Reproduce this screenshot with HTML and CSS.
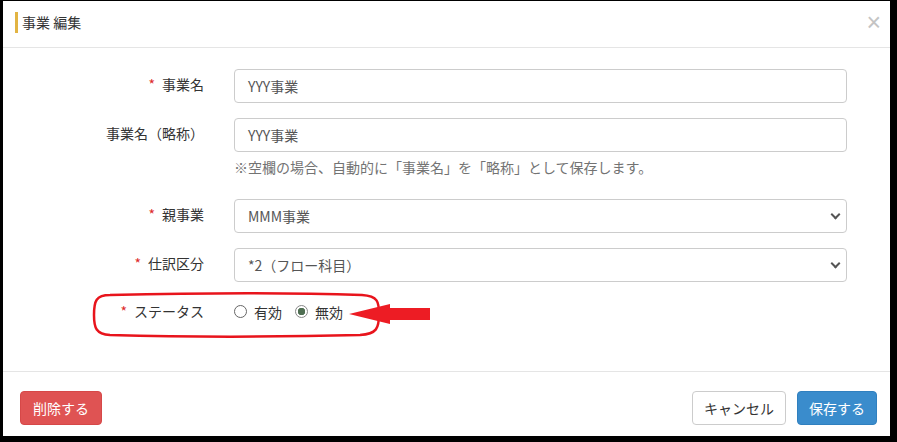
FILE: index.html
```html
<!DOCTYPE html>
<html lang="ja">
<head>
    <meta charset="UTF-8">
    <title>事業 編集</title>
    <link rel="stylesheet" href="styles.css">
</head>
<body>
    <div class="modal">
        <div class="modal-header">
            <div class="modal-title">事業 編集</div>
            <span class="close">&times;</span>
        </div>

        <div class="modal-body">
            <div class="form-row">
                <label class="form-label"><span class="req">*</span>事業名</label>
                <div><div class="input">YYY事業</div></div>
            </div>
            <div class="form-row">
                <label class="form-label">事業名（略称）</label>
                <div>
                    <div class="input">YYY事業</div>
                    <div class="help">※空欄の場合、自動的に「事業名」を「略称」として保存します。</div>
                </div>
            </div>
            <div class="form-row">
                <label class="form-label"><span class="req">*</span>親事業</label>
                <div><div class="input select">MMM事業</div></div>
            </div>
            <div class="form-row">
                <label class="form-label"><span class="req">*</span>仕訳区分</label>
                <div><div class="input select">*2（フロー科目）</div></div>
            </div>
            <div class="form-row radio-row">
                <label class="form-label"><span class="req">*</span>ステータス</label>
                <div class="radios">
                    <span class="radio"><span class="dot"></span>有効</span>
                    <span class="radio checked"><span class="dot"></span>無効</span>
                </div>
            </div>
        </div>

        <div class="modal-footer">
            <button class="btn btn-danger">削除する</button>
            <div class="right">
                <button class="btn btn-default">キャンセル</button>
                <button class="btn btn-primary">保存する</button>
            </div>
        </div>
    </div>

    <!-- red annotation drawn over the screenshot -->
    <svg class="mark" width="897" height="442" viewBox="0 0 897 442">
        <path d="M110 295 C 200 293, 300 293, 362 295 C 378 296, 379 302, 379 314 C 379 328, 377 334, 360 335 C 280 337, 180 337, 110 335 C 96 334, 94 328, 94 315 C 94 301, 96 295, 110 295 Z"
              fill="none" stroke="#e8141c" stroke-width="2.5"/>
        <polygon points="349,314 390,304 390,308 430,308 430,320 390,320 390,324" fill="#ed1c24"/>
    </svg>
</body>
</html>
```

FILE: styles.css
```css
*{
    box-sizing: border-box;
}
body{
    margin: 0;
    background: #000;
    font-family: "Noto Sans CJK JP", "Liberation Sans", sans-serif;
    font-size: 14px;
    color: #333;
}
.modal{
    margin: 1px 7px 6px 3px;
    height: 435px;
    background: #fff;
}
.modal-header{
    display: flex;
    justify-content: space-between;
    align-items: center;
    padding: 11px 9px 14px 12px;
    border-bottom: 1px solid #e5e5e5;
}
.modal-title{
    border-left: 3px solid #e2b443;
    padding-left: 4px;
    line-height: 21px;
    color: #333;
}
.close{
    font-family: "Liberation Sans", sans-serif;
    font-size: 25px;
    line-height: 21px;
    color: #c4c4c4;
}
.modal-body{
    padding: 21px 43px 46px 0;
}
.form-row{
    display: grid;
    grid-template-columns: 201px 1fr;
    column-gap: 30px;
    margin-bottom: 15px;
}
.form-label{
    text-align: right;
    padding-top: 5px;
    line-height: 20px;
}
.req{
    color: #dd2b2b;
    margin-right: 7px;
}
.input{
    position: relative;
    height: 34px;
    border: 1px solid #ccc;
    border-radius: 4px;
    padding: 6px 13px;
    line-height: 20px;
    color: #555;
}
.select::after{
    content: "";
    position: absolute;
    right: 7px;
    top: 11px;
    width: 5px;
    height: 5px;
    border-right: 2px solid #555;
    border-bottom: 2px solid #555;
    transform: rotate(45deg);
}
.help{
    margin: 5px 0 7px;
    line-height: 20px;
    color: #737373;
}
.radio-row{
    margin-bottom: 0;
    height: 28px;
}
.radio-row .form-label{
    padding-top: 4px;
}
.radios{
    display: flex;
    align-items: center;
    gap: 13px;
    padding-top: 1px;
}
.radio{
    display: flex;
    align-items: center;
    gap: 7px;
    color: #333;
}
.dot{
    width: 13px;
    height: 13px;
    border: 1px solid #666;
    border-radius: 50%;
    background: #fff;
}
.checked .dot{
    border-color: #888;
    background: radial-gradient(circle, #4f6e52 0 3.5px, #fff 4px);
}
.modal-footer{
    display: flex;
    justify-content: space-between;
    border-top: 1px solid #e5e5e5;
    padding: 19px 13px 10px 17px;
}
.right{
    display: flex;
    gap: 11px;
}
.btn{
    height: 34px;
    padding: 0 11px;
    border-radius: 4px;
    font-family: inherit;
    font-size: 14px;
    border: 1px solid transparent;
}
.btn-danger{
    background: #df5353;
    border-color: #d64848;
    color: #fff;
    padding: 0 12px;
}
.btn-default{
    background: #fff;
    border-color: #ccc;
    color: #333;
}
.btn-primary{
    background: #3a8ccc;
    border-color: #3080bf;
    color: #fff;
}
.mark{
    position: absolute;
    left: 0;
    top: 0;
    pointer-events: none;
}
```
